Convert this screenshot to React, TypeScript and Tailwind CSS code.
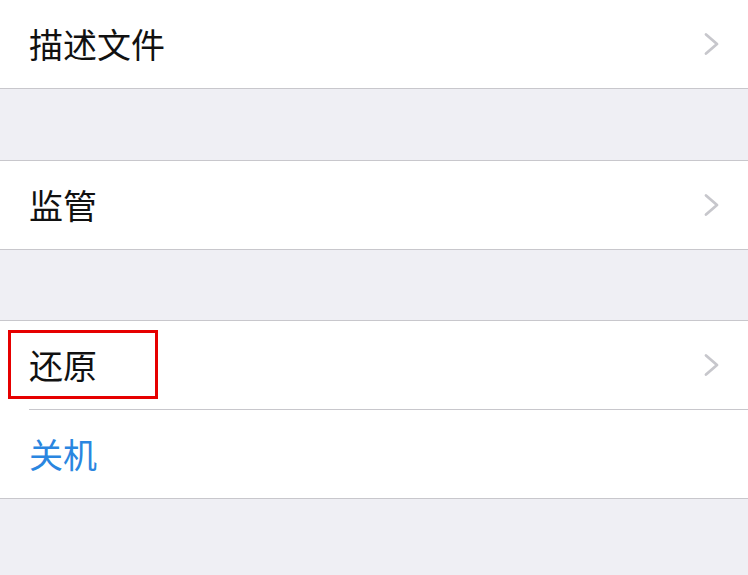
const Chevron = () => (
  <svg width="17" height="24" viewBox="0 0 17 24" fill="none">
    <path d="M3 2.5 L14 12 L3 21.5" stroke="#c7c7cc" strokeWidth="2.8" strokeLinecap="round" strokeLinejoin="round" />
  </svg>
);

type RowProps = { label: string; blue?: boolean; chevron?: boolean; children?: React.ReactNode };

const Row = ({ label, blue, chevron = true, children }: RowProps) => (
  <div className="relative flex h-[88px] items-center justify-between bg-white pl-[29px] pr-[28px]">
    <span className={`text-[34px] leading-none ${blue ? "text-[#2a86e0]" : "text-[#111]"}`}>{label}</span>
    {chevron && <Chevron />}
    {children}
  </div>
);

export default function App() {
  return (
    <div
      className="h-[575px] w-full overflow-hidden bg-[#efeff4]"
      style={{ fontFamily: '"Noto Sans CJK SC", "Noto Sans", sans-serif' }}
    >
      {/* first group */}
      <div className="border-b border-[#c8c7cc]">
        <Row label="描述文件" />
      </div>

      <div className="mt-[71px] border-y border-[#c8c7cc]">
        <Row label="监管" />
      </div>

      <div className="mt-[70px] border-y border-[#c8c7cc] bg-white">
        <Row label="还原">
          {/* highlight box */}
          <div className="absolute left-[8px] top-[9px] h-[69px] w-[150px] border-[3px] border-[#e60000]" />
        </Row>
        <div className="ml-[29px] h-px bg-[#c8c7cc]" />
        <Row label="关机" blue chevron={false} />
      </div>
    </div>
  );
}
